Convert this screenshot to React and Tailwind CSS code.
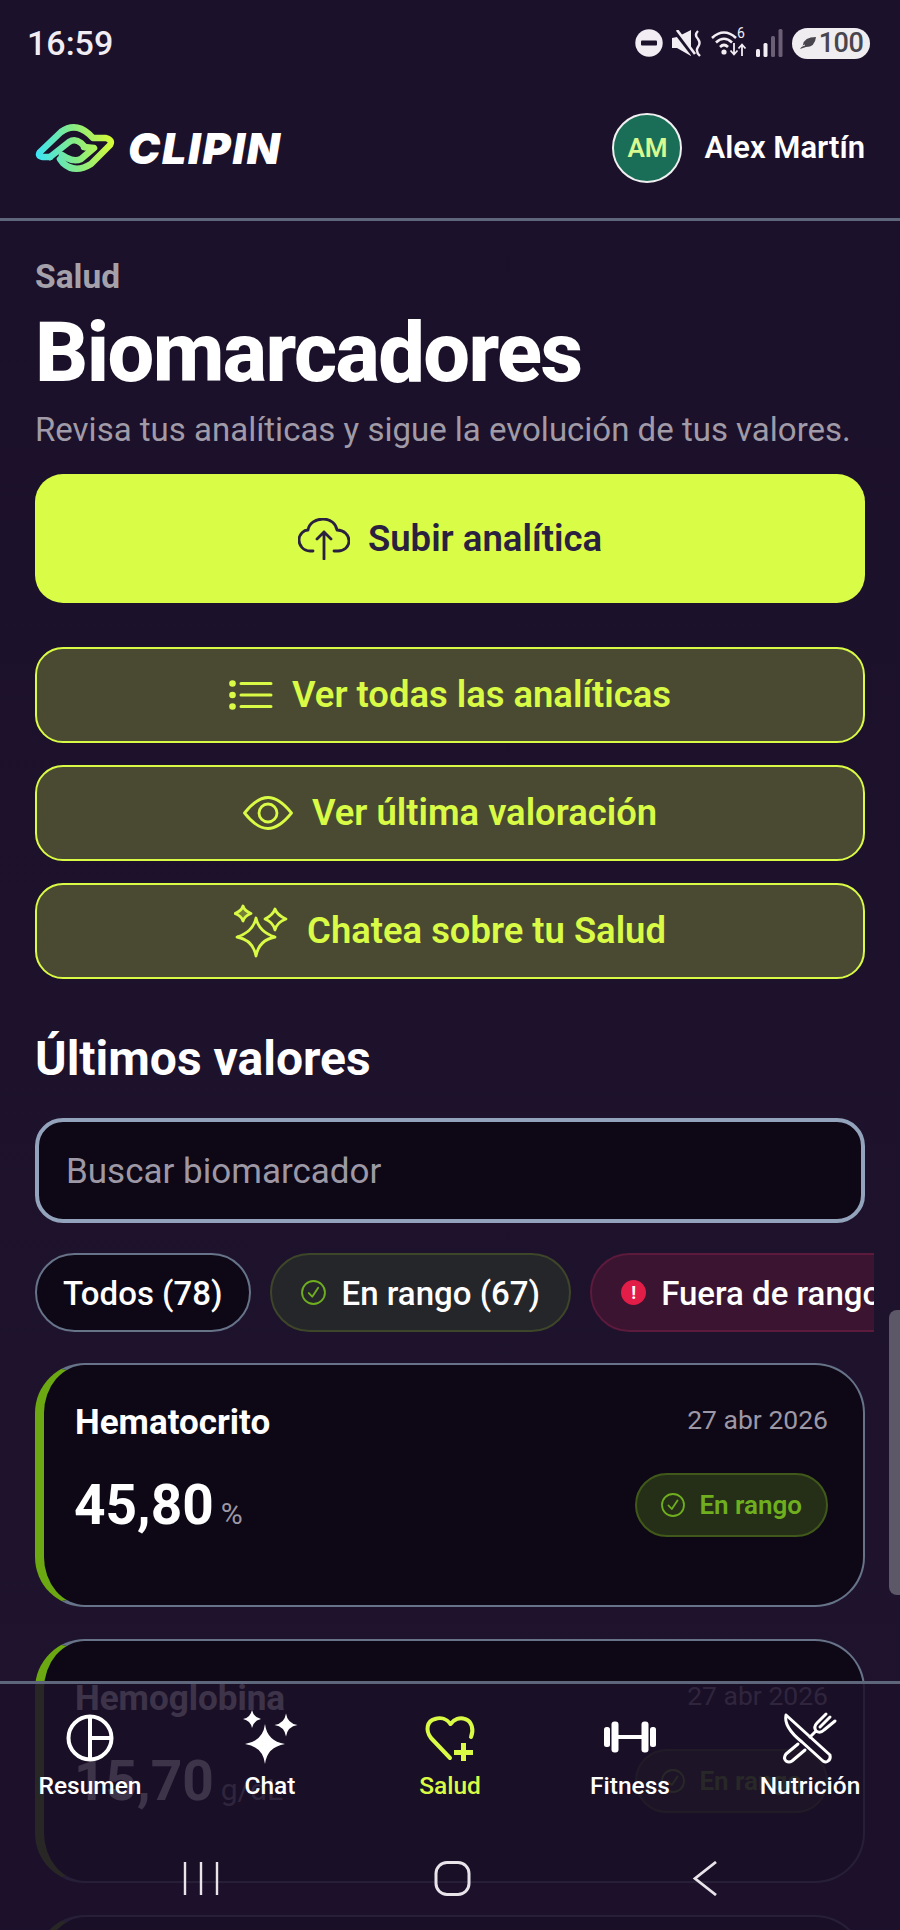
import React from "react";

const LIME = "#d9fb45";

function Logo() {
  return (
    <svg width="82" height="56" viewBox="10 4 82 56" fill="none" strokeWidth="6.5" strokeLinecap="round" strokeLinejoin="round">
      <defs>
        <linearGradient id="lg" gradientUnits="userSpaceOnUse" x1="12" y1="40" x2="88" y2="28">
          <stop offset="0" stopColor="#3de4f5" />
          <stop offset="0.5" stopColor="#84ea86" />
          <stop offset="1" stopColor="#d6fb36" />
        </linearGradient>
      </defs>
      <path stroke="url(#lg)" d="M25 41 L18 41 Q12 40 15 36 L36 16 Q50 6 64 18 L68 22 L81 22 Q88 24 85 29 L66 48 Q50 58 38 47 L35 43" />
      <path stroke="url(#lg)" d="M25 41 L44 26 Q50 22 56 27 L60 31" />
      <path stroke="url(#lg)" d="M37 39 L42 42 Q50 46 56 43 L69 32 L59 31" />
    </svg>
  );
}

function StatusIcons() {
  return (
    <div className="flex items-center">
      <svg width="28" height="28" viewBox="0 0 28 28" className="mr-[9px]">
        <circle cx="14" cy="14" r="13.7" fill="#f1edf3" />
        <rect x="6" y="11.5" width="16" height="5" rx="1" fill="#1c112a" />
      </svg>
      <svg width="30" height="27" viewBox="0 0 30 27" fill="none" className="mr-[9px]">
        <path d="M0 8 L5 7 L19 0 L19 26 L5 18 L0 18 Z" fill="#f1edf3" />
        <path d="M2 0 L22 26" stroke="#1c112a" strokeWidth="4" />
        <path d="M5 0 L23 24" stroke="#f1edf3" strokeWidth="2.6" />
        <path d="M26 1 Q22 5 26 9 Q29 13 26 17 Q23 21 28 26" stroke="#f1edf3" strokeWidth="2.4" />
      </svg>
      <div className="relative w-[36px] h-[28px] mr-[9px]">
        <svg width="27" height="26" viewBox="0 0 27 26" fill="none" className="absolute left-0 top-[1px]">
          <path d="M1 8 Q13 -3 25 8" stroke="#f1edf3" strokeWidth="2.6" />
          <path d="M5 12.5 Q13 5 21 12.5" stroke="#f1edf3" strokeWidth="2.6" />
          <path d="M9 17 Q13 13 17 17" stroke="#f1edf3" strokeWidth="2.6" />
          <circle cx="13" cy="22" r="2.6" fill="#f1edf3" />
        </svg>
        <span className="absolute left-[26px] top-[-3px] text-[14px] leading-[14px] text-[#f1edf3]">6</span>
        <svg width="18" height="16" viewBox="0 0 18 16" fill="none" stroke="#f1edf3" strokeWidth="1.8" className="absolute left-[18px] top-[13px]">
          <path d="M5 1 V12 M1.5 8.5 L5 12.5 L8.5 8.5" />
          <path d="M13 14 V3 M9.5 6.5 L13 2.5 L16.5 6.5" />
        </svg>
      </div>
      <svg width="27" height="28" viewBox="0 0 27 28" className="mr-[9px]">
        <rect x="0" y="20" width="4" height="8" rx="1.5" fill="#f1edf3" />
        <rect x="7.5" y="14" width="4" height="14" rx="1.5" fill="#f1edf3" />
        <rect x="15" y="7" width="4" height="21" rx="1.5" fill="#6b5f75" />
        <rect x="22.5" y="0" width="4" height="28" rx="1.5" fill="#6b5f75" />
      </svg>
      <div className="flex items-center justify-center w-[78px] h-[31px] rounded-full bg-[#efedf0] text-[#48454e] text-[27px] font-medium leading-none tracking-[-0.5px]">
        <svg width="18" height="16" viewBox="0 0 18 16" className="mr-[2px]">
          <path d="M4 10 Q5 2 17 2 Q16 12 7 12 L1 14 Z" fill="#48454e" />
          <path d="M1 12 L6 10" stroke="#efedf0" strokeWidth="1" />
        </svg>
        100
      </div>
    </div>
  );
}

function CloudUp() {
  return (
    <svg width="52" height="42" viewBox="0 0 52 42" fill="none" stroke="#2a2040" strokeWidth="2.8" strokeLinecap="round" strokeLinejoin="round">
      <path d="M15 33 H12 C5 33 1 27 1 22 C1 16 6 12 10 12 C11 5 18 1 25 1 C33 1 38 6 39 12 C46 12 51 17 51 23 C51 29 46 33 40 33 H36" />
      <path d="M26 41 V14 M19 21 L26 14 L33 21" />
    </svg>
  );
}

function ListIcon() {
  return (
    <svg width="44" height="30" viewBox="0 0 44 30" fill="none" stroke={LIME} strokeWidth="3" strokeLinecap="round">
      <path d="M12 3.5 H42 M12 15 H42 M12 26.5 H42" />
      <g fill={LIME} stroke="none">
        <circle cx="3.5" cy="3.5" r="3.3" />
        <circle cx="3.5" cy="15" r="3.3" />
        <circle cx="3.5" cy="26.5" r="3.3" />
      </g>
    </svg>
  );
}

function EyeIcon() {
  return (
    <svg width="50" height="34" viewBox="0 0 50 34" fill="none" stroke={LIME} strokeWidth="2.8" strokeLinejoin="round">
      <path d="M1.5 17 Q14 1.5 25 1.5 Q36 1.5 48.5 17 Q36 32.5 25 32.5 Q14 32.5 1.5 17 Z" />
      <circle cx="25" cy="17" r="9" />
    </svg>
  );
}

function SparkIcon() {
  return (
    <svg width="54" height="54" viewBox="0 0 54 54" fill="none" stroke={LIME} strokeWidth="2.8" strokeLinejoin="round">
      <path d="M9 2 Q10.5 7 17 9.5 Q10.5 12 9 17 Q7.5 12 1 9.5 Q7.5 7 9 2 Z" fill={LIME} fillOpacity="0.3" />
      <path d="M41 5 Q43 11 52 15 Q43 18 41 26 Q39 18 31 15 Q39 11 41 5 Z" />
      <path d="M22 14 Q25 28 41 33 Q25 36 22 52 Q19 36 3 33 Q19 28 22 14 Z" />
    </svg>
  );
}

function SmallCheck({ size = 24, color = "#6fae1e" }) {
  return (
    <svg width={size} height={size} viewBox="0 0 24 24" fill="none" stroke={color} strokeWidth="1.8" strokeLinecap="round" strokeLinejoin="round" className="shrink-0">
      <circle cx="12" cy="12" r="11" />
      <path d="M7.5 12.5 L10.8 16 L16.5 7.5" />
    </svg>
  );
}

function ActionButton({ icon, children }) {
  return (
    <button className="flex items-center justify-center gap-[19px] w-full h-[96px] rounded-[28px] border-2 border-[#d9fb45] bg-[#4a4a33] text-[#d9fb45] text-[36.4px] font-semibold">
      {icon}
      <span>{children}</span>
    </button>
  );
}

const cardShell = "shrink-0 h-[244px] rounded-[50px] border-2 border-l-[9px] border-[#667389] border-l-[#6ba812] bg-[#0d0716] pl-[31px] pr-[35px] pt-[34px]";

function Card({ name, value, unit }) {
  return (
    <div className={cardShell}>
      <div className="flex items-start justify-between">
        <span className="text-[35px] leading-[48px] font-bold text-white">{name}</span>
        <span className="text-[26.5px] leading-[42px] text-[#9d98a5]">27 abr 2026</span>
      </div>
      <div className="flex items-center justify-between mt-[26px]">
        <div className="flex items-baseline gap-[7px] -ml-[1px]">
          <span className="text-[55px] leading-[64px] font-bold text-white">{value}</span>
          <span className="text-[30px] text-[#9d98a5]">{unit}</span>
        </div>
        <div className="flex items-center gap-[14px] h-[64px] px-[24px] rounded-full border-2 border-[#40591a] bg-[#252f17] text-[#6fae1e] text-[26px] font-semibold">
          <SmallCheck />
          En rango
        </div>
      </div>
    </div>
  );
}

function NavItem({ icon, label, active }) {
  return (
    <div className="flex flex-col items-center">
      <div className="h-[56px] w-[60px]">{icon}</div>
      <span className={`mt-[5px] text-[24.5px] leading-[30px] font-medium whitespace-nowrap ${active ? "text-[#d9fb45]" : "text-white"}`}>{label}</span>
    </div>
  );
}

function NavSvg({ children, stroke = "#fff", sw = 4 }) {
  return (
    <svg width="60" height="56" viewBox="0 0 60 56" fill="none" stroke={stroke} strokeWidth={sw} strokeLinecap="round" strokeLinejoin="round">
      {children}
    </svg>
  );
}

export default function App() {
  return (
    <div className="relative w-[900px] h-[1930px] overflow-hidden bg-gradient-to-b from-[#1b1029] to-[#1f132e] text-white [font-family:Roboto,sans-serif]">
      <header className="h-[221px] border-b-[3px] border-[#5d667b] bg-[#1c112a] px-[35px]">
        <div className="flex items-center justify-between h-[86px] -ml-[8px] -mr-[5px]">
          <span className="text-[34px] font-medium text-[#f1edf3]">16:59</span>
          <StatusIcons />
        </div>
        <div className="flex items-center justify-between mt-[27px]">
          <div className="flex items-center gap-[11px]">
            <Logo />
            <span className="[font-family:Inter,sans-serif] text-[43px] leading-none font-black italic text-white tracking-[1.8px]">CLIPIN</span>
          </div>
          <div className="flex items-center gap-[22px]">
            <div className="flex items-center justify-center w-[70px] h-[70px] rounded-full border-2 border-[#f0f0f0] bg-[#1a6e57] text-[#d8f98f] text-[26px] font-semibold">AM</div>
            <span className="text-[31px] font-semibold text-white">Alex Martín</span>
          </div>
        </div>
      </header>

      <main className="px-[35px] pt-[36px] flex flex-col">
        <div className="text-[33.5px] leading-[40px] font-bold text-[#a5a1ab]">Salud</div>
        <h1 className="mt-[11px] text-[83px] leading-[90px] font-extrabold tracking-[-1.6px] text-white">Biomarcadores</h1>
        <p className="mt-[10px] text-[33px] leading-[44px] text-[#a09ba7] whitespace-nowrap">Revisa tus analíticas y sigue la evolución de tus valores.</p>

        <button className="mt-[22px] flex items-center justify-center gap-[18px] w-full h-[129px] rounded-[28px] bg-[#d9fc46] text-[#2a2040] text-[36.5px] font-semibold">
          <CloudUp />
          <span className="pt-[1px]">Subir analítica</span>
        </button>

        <div className="mt-[44px] flex flex-col gap-[22px]">
          <ActionButton icon={<ListIcon />}>Ver todas las analíticas</ActionButton>
          <ActionButton icon={<EyeIcon />}>Ver última valoración</ActionButton>
          <ActionButton icon={<SparkIcon />}>Chatea sobre tu Salud</ActionButton>
        </div>

        <h2 className="mt-[51px] text-[48px] leading-[58px] font-bold text-white">Últimos valores</h2>

        <div className="mt-[30px] h-[105px] rounded-[28px] border-4 border-[#93a3bc] bg-[#0d0716] flex items-center px-[27px] pt-[3px]">
          <input readOnly placeholder="Buscar biomarcador" className="w-full bg-transparent outline-none text-[35px] placeholder:text-[#9d98a5]" />
        </div>

        <div className="mt-[30px] w-[839px] overflow-hidden flex gap-[19px] shrink-0">
          <div className="shrink-0 flex items-center h-[79px] px-[26px] pt-[3px] rounded-full border-2 border-[#667389] bg-[#0d0716] text-[33px] font-medium">Todos (78)</div>
          <div className="shrink-0 flex items-center gap-[16px] h-[79px] px-[29px] rounded-full border-2 border-[#3d4628] bg-[#25262a] text-[33px] font-medium">
            <SmallCheck size={25} />
            <span className="pt-[3px]">En rango (67)</span>
          </div>
          <div className="shrink-0 flex items-center gap-[15px] h-[79px] px-[29px] rounded-full border-2 border-[#5c1a3c] bg-[#3a1430] text-[33px] font-medium whitespace-nowrap">
            <span className="flex items-center justify-center w-[25px] h-[25px] rounded-full bg-[#e11d48] text-[18px] font-bold leading-none">!</span>
            <span className="pt-[3px]">Fuera de rango</span>
          </div>
        </div>

        <div className="mt-[31px] flex flex-col gap-[32px]">
          <Card name="Hematocrito" value="45,80" unit="%" />
          <Card name="Hemoglobina" value="15,70" unit="g/dL" />
          <div className={cardShell} />
        </div>
      </main>

      <div className="absolute right-0 top-[1310px] w-[11px] h-[285px] rounded-l-[8px] bg-[#5d5868]" />

      <nav className="absolute left-0 right-0 top-[1681px] bottom-0 border-t-[3px] border-[#5d667b] bg-[#1c112a]/85">
        <div className="grid grid-cols-5 pt-[26px]">
          <NavItem
            label="Resumen"
            icon={
              <NavSvg>
                <circle cx="30" cy="28" r="21.5" />
                <path d="M30 7 V49 M30 28 H51" strokeLinecap="butt" />
              </NavSvg>
            }
          />
          <NavItem
            label="Chat"
            icon={
              <NavSvg stroke="none">
                <g fill="#fff">
                  <path d="M25 14 Q27 31 45 34 Q27 37 25 54 Q23 37 5 34 Q23 31 25 14 Z" />
                  <path d="M12 0 Q13.5 7.5 21 9 Q13.5 10.5 12 18 Q10.5 10.5 3 9 Q10.5 7.5 12 0 Z" />
                  <path d="M46 3.5 Q47.5 13.5 57.5 15 Q47.5 16.5 46 26.5 Q44.5 16.5 34.5 15 Q44.5 13.5 46 3.5 Z" />
                </g>
              </NavSvg>
            }
          />
          <NavItem
            active
            label="Salud"
            icon={
              <NavSvg stroke={LIME}>
                <path d="M30 48 L11 28 C5 20 7 11 15 9 C21 7 27 9 30.5 14 C34 9 40 7 45 9 C52 11 54 20 51 27" />
                <path d="M43.5 33 V51 M34 42.5 H53" strokeWidth="5" strokeLinecap="butt" />
              </NavSvg>
            }
          />
          <NavItem
            label="Fitness"
            icon={
              <NavSvg sw={3}>
                <path d="M16 27 H44" strokeWidth="4" />
                <rect x="11.5" y="11.5" width="7" height="31" rx="3" fill="#fff" stroke="none" />
                <rect x="41.5" y="11.5" width="7" height="31" rx="3" fill="#fff" stroke="none" />
                <rect x="4" y="17" width="6" height="20" rx="2.5" fill="#fff" stroke="none" />
                <rect x="50" y="17" width="6" height="20" rx="2.5" fill="#fff" stroke="none" />
              </NavSvg>
            }
          />
          <NavItem
            label="Nutrición"
            icon={
              <NavSvg sw={3}>
                <path d="M6 5 L50 45 Q51 49 48 51 Q46 53 43 51 L22 32 C12 24 4 14 6 5 Z" />
                <path d="M18 34 L6 44 Q3 48 6 51 Q9 53 12 51 L25 40" />
                <path d="M30 27 L36 21 M36 21 C34 18 35 15 37 13 L46 4 M36 21 C39 23 42 22 44 20 L55 11 M40 17 L50 7" />
              </NavSvg>
            }
          />
        </div>
        <div className="absolute left-0 right-0 top-[177px] flex items-center justify-center gap-[212px] pl-[6px]">
          <svg width="40" height="35" viewBox="0 0 40 35" fill="none" stroke="#e8e4ea" strokeWidth="2.4">
            <path d="M4 1 V34 M20 1 V34 M36 1 V34" />
          </svg>
          <svg width="40" height="35" viewBox="0 0 40 35" fill="none" stroke="#e8e4ea" strokeWidth="3">
            <rect x="3" y="1.5" width="33" height="32" rx="11" />
          </svg>
          <svg width="40" height="35" viewBox="0 0 40 35" fill="none" stroke="#e8e4ea" strokeWidth="2.8">
            <path d="M31 1 L10 17.5 L31 34" />
          </svg>
        </div>
      </nav>
    </div>
  );
}
